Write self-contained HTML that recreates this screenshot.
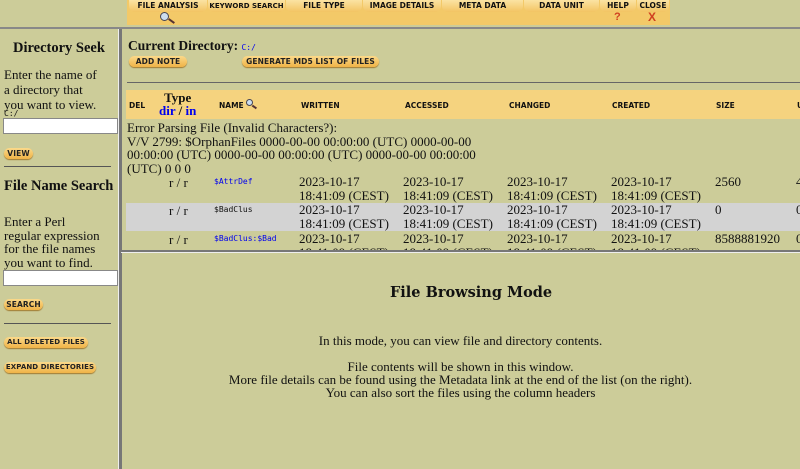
<!DOCTYPE html>
<html><head><style>
body{margin:0;width:800px;height:469px;background:#cccc99;font-family:"Liberation Serif","DejaVu Serif",serif;color:#111;position:relative;overflow:hidden}
.a{position:absolute;white-space:nowrap}
.btn{position:absolute;white-space:nowrap;background:linear-gradient(#fbd98a,#f0b347);border-radius:6px;font:bold 7.5px "DejaVu Sans",sans-serif;text-align:center;color:#222;box-shadow:0 1px 1px #a07a30;text-transform:uppercase;letter-spacing:0.1px;overflow:hidden}
.tb{position:absolute;white-space:nowrap;top:0;height:12px;background:linear-gradient(#fbe3a3,#f3c463);border-radius:0 0 6px 6px;font:bold 7.5px "DejaVu Sans",sans-serif;text-align:center;line-height:12px;text-transform:uppercase;overflow:hidden}
.s{font-size:13px;line-height:14px}
.mono{font-family:"DejaVu Sans Mono",monospace;font-size:8px}
a{color:#0000ee}
.h{font:bold 7.5px "DejaVu Sans",sans-serif;text-transform:uppercase}
</style></head><body>
<div class="a" style="left:127px;top:0;width:543px;height:25px;background:#f3c968"></div>
<div class="tb" style="left:129px;width:78px">File Analysis</div>
<div class="tb" style="left:208px;width:77px;font-size:7px">Keyword Search</div>
<div class="tb" style="left:286px;width:76px">File Type</div>
<div class="tb" style="left:363px;width:78px">Image Details</div>
<div class="tb" style="left:442px;width:81px">Meta Data</div>
<div class="tb" style="left:524px;width:75px">Data Unit</div>
<div class="tb" style="left:600px;width:36px">Help</div>
<div class="tb" style="left:637px;width:32px">Close</div>
<div class="a" style="left:160px;top:12px;width:7px;height:7px;border:1.5px solid #445;border-radius:50%;background:#cde"></div>
<div class="a" style="left:168px;top:20px;width:7px;height:2px;background:#533;transform:rotate(35deg)"></div>
<div class="a" style="left:614px;top:11px;color:#d04020;font:bold 11px sans-serif">?</div>
<div class="a" style="left:648px;top:10px;color:#d04020;font:bold 12px sans-serif">X</div>
<div class="a" style="left:0;top:27px;width:800px;height:2px;background:#888"></div>
<div class="a" style="left:118px;top:29px;width:3px;height:440px;background:#777;border-left:1px solid #eee"></div>
<div class="a" style="left:13px;top:40px;font-weight:bold;font-size:14.5px">Directory Seek</div>
<div class="a s" style="left:4px;top:67px;line-height:15px">Enter the name of<br>a directory that<br>you want to view.</div>
<div class="a mono" style="left:4px;top:109px">C:/</div>
<div class="a" style="left:3px;top:118px;width:113px;height:14px;background:#fff;border:1px solid #888"></div>
<div class="btn" style="left:4px;top:148px;width:29px;height:11px;line-height:11px">View</div>
<div class="a" style="left:4px;top:166px;width:107px;height:1px;background:#555"></div>
<div class="a" style="left:4px;top:178px;font-weight:bold;font-size:14.5px">File Name Search</div>
<div class="a s" style="left:4px;top:215px;line-height:13.5px">Enter a Perl<br>regular expression<br>for the file names<br>you want to find.</div>
<div class="a" style="left:3px;top:270px;width:113px;height:14px;background:#fff;border:1px solid #888"></div>
<div class="btn" style="left:4px;top:299px;width:39px;height:11px;line-height:11px">Search</div>
<div class="a" style="left:4px;top:323px;width:107px;height:1px;background:#555"></div>
<div class="btn" style="left:4px;top:337px;width:84px;height:11px;line-height:11px;font-size:7px">All Deleted Files</div>
<div class="btn" style="left:4px;top:362px;width:92px;height:11px;line-height:11px;font-size:7px">Expand Directories</div>
<div class="a" style="left:128px;top:38px;font-weight:bold;font-size:13.5px">Current Directory: <a class="mono" style="font-weight:normal">C:/</a></div>
<div class="btn" style="left:129px;top:56px;width:58px;height:11px;line-height:11px">Add Note</div>
<div class="btn" style="left:242px;top:56px;width:137px;height:11px;line-height:11px">Generate MD5 List of Files</div>
<div class="a" style="left:127px;top:82px;width:673px;height:1px;background:#666"></div>
<div class="a" style="left:126px;top:90px;width:674px;height:29px;background:#f5d37f"></div>
<div class="a h" style="left:129px;top:101px">Del</div>
<div class="a" style="left:159px;top:91px;font-weight:bold;font-size:13px;text-align:center;line-height:13px">Type<br><a>dir</a> / <a>in</a></div>
<div class="a h" style="left:219px;top:101px">Name</div>
<div class="a" style="left:246px;top:99px;width:5px;height:5px;border:1.3px solid #445;border-radius:50%;background:#cde"></div>
<div class="a" style="left:252px;top:106px;width:5px;height:1.5px;background:#533;transform:rotate(35deg)"></div>
<div class="a h" style="left:301px;top:101px">Written</div>
<div class="a h" style="left:405px;top:101px">Accessed</div>
<div class="a h" style="left:509px;top:101px">Changed</div>
<div class="a h" style="left:612px;top:101px">Created</div>
<div class="a h" style="left:716px;top:101px">Size</div>
<div class="a h" style="left:797px;top:101px">U</div>
<div class="a s" style="left:127px;top:121px;line-height:13.5px">Error Parsing File (Invalid Characters?):<br>V/V 2799: $OrphanFiles 0000-00-00 00:00:00 (UTC) 0000-00-00<br>00:00:00 (UTC) 0000-00-00 00:00:00 (UTC) 0000-00-00 00:00:00<br>(UTC) 0 0 0</div>
<div class="a" style="left:126px;top:203px;width:674px;height:28px;background:#d3d3d3"></div>
<div class="a" style="left:126px;top:175px;width:674px;height:75px;overflow:hidden">
 <div class="a s" style="left:43px;top:1px">r / r</div><a class="a mono" style="left:88px;top:2px">$AttrDef</a>
 <div class="a s" style="left:173px;top:0">2023-10-17<br>18:41:09 (CEST)</div><div class="a s" style="left:277px;top:0">2023-10-17<br>18:41:09 (CEST)</div><div class="a s" style="left:381px;top:0">2023-10-17<br>18:41:09 (CEST)</div><div class="a s" style="left:485px;top:0">2023-10-17<br>18:41:09 (CEST)</div><div class="a s" style="left:589px;top:0">2560</div><div class="a s" style="left:670px;top:0">4</div>
 <div class="a s" style="left:43px;top:29px">r / r</div><div class="a mono" style="left:88px;top:30px">$BadClus</div>
 <div class="a s" style="left:173px;top:28px">2023-10-17<br>18:41:09 (CEST)</div><div class="a s" style="left:277px;top:28px">2023-10-17<br>18:41:09 (CEST)</div><div class="a s" style="left:381px;top:28px">2023-10-17<br>18:41:09 (CEST)</div><div class="a s" style="left:485px;top:28px">2023-10-17<br>18:41:09 (CEST)</div><div class="a s" style="left:589px;top:28px">0</div><div class="a s" style="left:670px;top:28px">0</div>
 <div class="a s" style="left:43px;top:58px">r / r</div><a class="a mono" style="left:88px;top:59px">$BadClus:$Bad</a>
 <div class="a s" style="left:173px;top:57px">2023-10-17<br>18:41:09 (CEST)</div><div class="a s" style="left:277px;top:57px">2023-10-17<br>18:41:09 (CEST)</div><div class="a s" style="left:381px;top:57px">2023-10-17<br>18:41:09 (CEST)</div><div class="a s" style="left:485px;top:57px">2023-10-17<br>18:41:09 (CEST)</div><div class="a s" style="left:589px;top:57px">8588881920</div><div class="a s" style="left:670px;top:57px">0</div>
</div>
<div class="a" style="left:121px;top:250px;width:679px;height:2px;background:#777;border-bottom:1px solid #eee"></div>
<div class="a" style="left:390px;top:284px;font-weight:bold;font-size:14.5px;font-family:'DejaVu Serif',serif">File Browsing Mode</div>
<div class="a" style="left:121px;top:334px;width:679px;text-align:center;font-size:13px;line-height:13px;white-space:normal">In this mode, you can view file and directory contents.<br><br>File contents will be shown in this window.<br>More file details can be found using the Metadata link at the end of the list (on the right).<br>You can also sort the files using the column headers</div>
</body></html>
